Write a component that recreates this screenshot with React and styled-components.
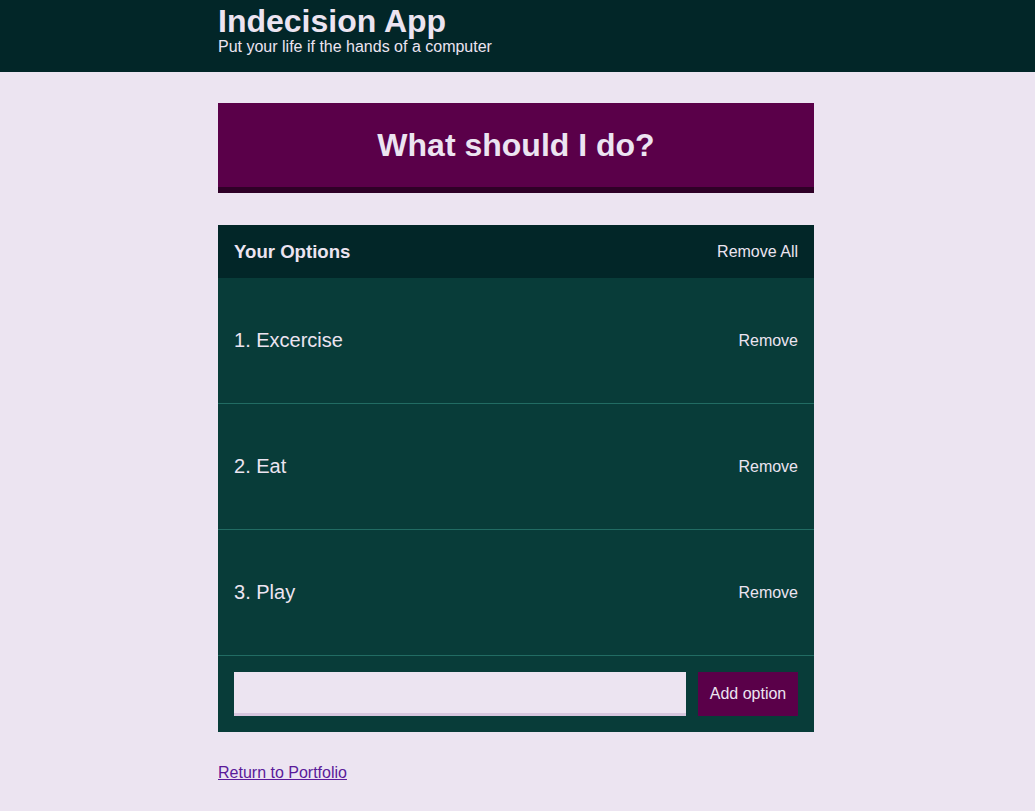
import React from 'react'
import styled, { createGlobalStyle } from 'styled-components'

const GlobalStyle = createGlobalStyle`
  html, body {
    margin: 0;
    padding: 0;
    background: #ece4f1;
    font-family: "Liberation Sans", Arial, sans-serif;
  }
  #root {
    padding-right: 3px;
  }
`

const Header = styled.header`
  background: #022628;
  color: #ece4f1;
  height: 72px;
  box-sizing: border-box;
  padding: 4px 3px 0 0;
  margin-right: -3px;
`

const Container = styled.div`
  width: 596px;
  margin: 0 auto;
`

const Title = styled.h1`
  font-size: 32px;
  line-height: 34px;
  margin: 0;
`

const Subtitle = styled.h2`
  font-size: 16px;
  font-weight: normal;
  line-height: 18px;
  margin: 0;
`

const Main = styled(Container)`
  padding-top: 31px;
`

const BigButton = styled.button`
  display: block;
  width: 100%;
  height: 90px;
  background: #5a0049;
  border: none;
  border-bottom: 6px solid #2f0027;
  color: #ece4f1;
  font-family: inherit;
  font-size: 32px;
  font-weight: bold;
  padding: 0;
  margin-bottom: 32px;
`

const Widget = styled.div`
  background: #083c39;
`

const WidgetHeader = styled.div`
  background: #022628;
  color: #ece4f1;
  display: flex;
  justify-content: space-between;
  align-items: center;
  height: 53px;
  padding: 0 16px;
`

const WidgetTitle = styled.h3`
  margin: 0;
  font-size: 18.6px;
  font-weight: bold;
`

const LinkButton = styled.button`
  background: none;
  border: none;
  padding: 0;
  color: #ece4f1;
  font-family: inherit;
  font-size: 16px;
  cursor: pointer;
`

const Option = styled.div`
  display: flex;
  justify-content: space-between;
  align-items: center;
  height: 126px;
  box-sizing: border-box;
  padding: 0 16px;
  border-bottom: 1px solid #216c63;
  color: #ece4f1;
`

const OptionText = styled.p`
  margin: 0;
  font-size: 20px;
`

const Form = styled.form`
  display: flex;
  gap: 12px;
  padding: 16px;
`

const Input = styled.input`
  flex: 1;
  height: 44px;
  box-sizing: border-box;
  background: #ece4f1;
  border: none;
  border-bottom: 3px solid #d6c6de;
  outline: none;
`

const AddButton = styled.button`
  width: 100px;
  height: 44px;
  background: #5a0049;
  border: none;
  color: #ece4f1;
  font-family: inherit;
  font-size: 16px;
`

const Footer = styled.p`
  margin: 32px 0 0;
  font-size: 16px;
  & a {
    color: #5a1a9a;
  }
`

const options = ['Excercise', 'Eat', 'Play']

const App = () => {
  return (
    <>
      <GlobalStyle />
      <Header>
        <Container>
          <Title>Indecision App</Title>
          <Subtitle>Put your life if the hands of a computer</Subtitle>
        </Container>
      </Header>
      <Main>
        <BigButton>What should I do?</BigButton>
        <Widget>
          <WidgetHeader>
            <WidgetTitle>Your Options</WidgetTitle>
            <LinkButton>Remove All</LinkButton>
          </WidgetHeader>
          {options.map((o, i) => (
            <Option key={o}>
              <OptionText>{i + 1}. {o}</OptionText>
              <LinkButton>Remove</LinkButton>
            </Option>
          ))}
          <Form onSubmit={e => e.preventDefault()}>
            <Input type="text" name="option" />
            <AddButton>Add option</AddButton>
          </Form>
        </Widget>
        <Footer>
          <a href="#">Return to Portfolio</a>
        </Footer>
      </Main>
    </>
  )
}

export default App
